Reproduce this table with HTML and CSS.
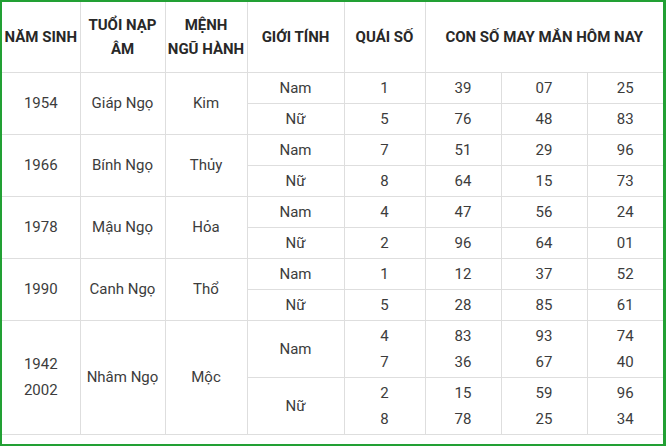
FILE: index.html
```html
<!DOCTYPE html>
<html lang="vi">
<head>
<meta charset="utf-8">
<title>Con số may mắn tuổi Ngọ</title>
<link rel="stylesheet" href="styles.css">
</head>
<body>
<div class="frame">
  <table class="lucky">
    <colgroup>
      <col class="c1"><col class="c2"><col class="c3"><col class="c4"><col class="c5"><col class="c6"><col class="c7"><col class="c8">
    </colgroup>
    <thead>
      <tr class="head">
        <th>NĂM SINH</th>
        <th>TUỔI NẠP<br>ÂM</th>
        <th>MỆNH<br>NGŨ HÀNH</th>
        <th>GIỚI TÍNH</th>
        <th>QUÁI SỐ</th>
        <th colspan="3">CON SỐ MAY MẮN HÔM NAY</th>
      </tr>
    </thead>
    <tbody>
      <tr class="r">
        <td rowspan="2">1954</td><td rowspan="2">Giáp Ngọ</td><td rowspan="2">Kim</td>
        <td>Nam</td><td>1</td><td>39</td><td>07</td><td>25</td>
      </tr>
      <tr class="r">
        <td>Nữ</td><td>5</td><td>76</td><td>48</td><td>83</td>
      </tr>
      <tr class="r">
        <td rowspan="2">1966</td><td rowspan="2">Bính Ngọ</td><td rowspan="2">Thủy</td>
        <td>Nam</td><td>7</td><td>51</td><td>29</td><td>96</td>
      </tr>
      <tr class="r">
        <td>Nữ</td><td>8</td><td>64</td><td>15</td><td>73</td>
      </tr>
      <tr class="r">
        <td rowspan="2">1978</td><td rowspan="2">Mậu Ngọ</td><td rowspan="2">Hỏa</td>
        <td>Nam</td><td>4</td><td>47</td><td>56</td><td>24</td>
      </tr>
      <tr class="r">
        <td>Nữ</td><td>2</td><td>96</td><td>64</td><td>01</td>
      </tr>
      <tr class="r">
        <td rowspan="2">1990</td><td rowspan="2">Canh Ngọ</td><td rowspan="2">Thổ</td>
        <td>Nam</td><td>1</td><td>12</td><td>37</td><td>52</td>
      </tr>
      <tr class="r">
        <td>Nữ</td><td>5</td><td>28</td><td>85</td><td>61</td>
      </tr>
      <tr class="r2">
        <td rowspan="2" class="multi">1942<br>2002</td><td rowspan="2">Nhâm Ngọ</td><td rowspan="2">Mộc</td>
        <td>Nam</td><td class="multi">4<br>7</td><td class="multi">83<br>36</td><td class="multi">93<br>67</td><td class="multi">74<br>40</td>
      </tr>
      <tr class="r2">
        <td>Nữ</td><td class="multi">2<br>8</td><td class="multi">15<br>78</td><td class="multi">59<br>25</td><td class="multi">96<br>34</td>
      </tr>
    </tbody>
  </table>
</div>
</body>
</html>
```

FILE: styles.css
```css
html, body {
  margin: 0;
  padding: 0;
  background: #ffffff;
}

.frame {
  width: 666px;
  height: 446px;
  box-sizing: border-box;
  border: 2px solid #22a034;
  border-right-width: 3px;
  background: #ffffff;
  overflow: hidden;
}

.lucky {
  width: 661px;
  border-collapse: collapse;
  table-layout: fixed;
  font-family: Roboto, "Liberation Sans", sans-serif;
  font-size: 15px;
  color: #3c3c3c;
  text-align: center;
}

.c1 { width: 78px; }
.c2 { width: 85px; }
.c3 { width: 82px; }
.c4 { width: 97px; }
.c5 { width: 81px; }
.c6 { width: 76px; }
.c7 { width: 86px; }
.c8 { width: 76px; }

.lucky th,
.lucky td {
  border: 1px solid #dedede;
  padding: 0 2px;
  vertical-align: middle;
}

.lucky tr > :first-child { border-left: none; }
.lucky tr > :last-child { border-right: none; }
.lucky thead th { border-top: none; }

.lucky th {
  font-weight: 700;
  color: #282828;
  line-height: 24px;
}

.head { height: 70px; }
.r { height: 31px; }
.r2 { height: 57px; }

.lucky td { line-height: 20px; }
.lucky td.multi { line-height: 26px; }
```
